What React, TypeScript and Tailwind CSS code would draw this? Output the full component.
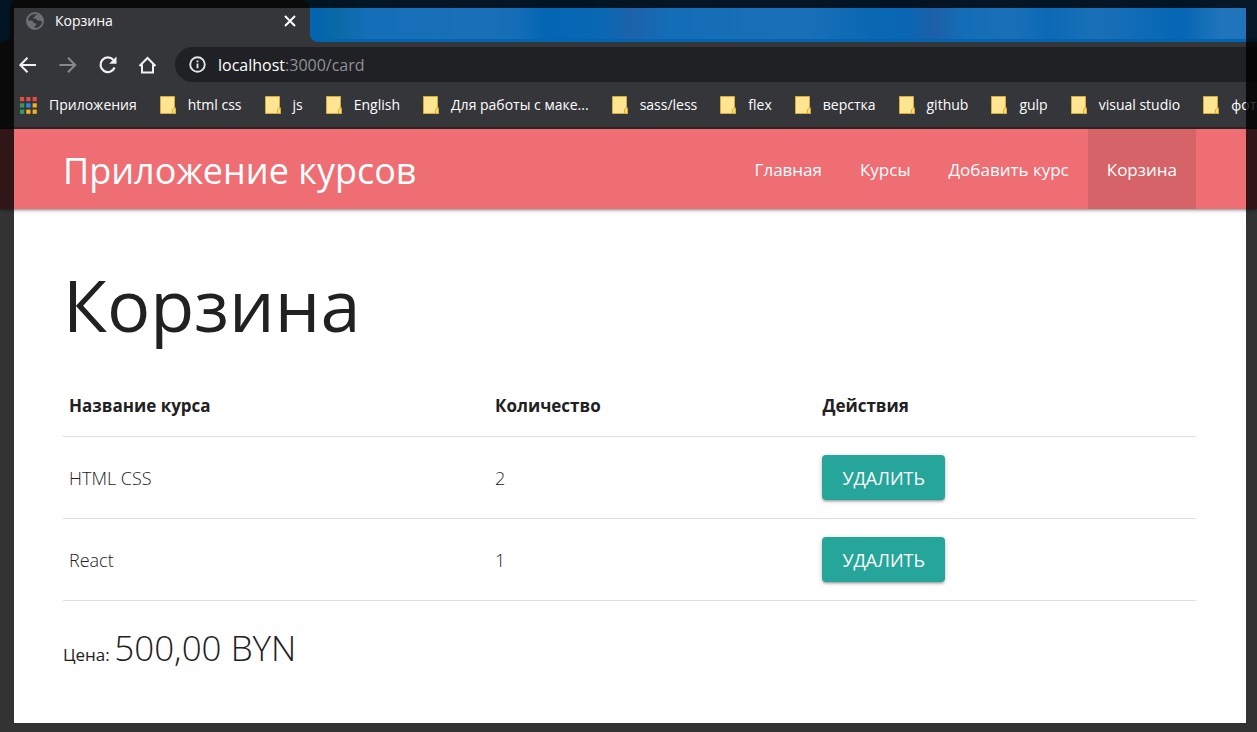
import React from "react";

const bookmarks = [
  "html css",
  "js",
  "English",
  "Для работы с маке...",
  "sass/less",
  "flex",
  "верстка",
  "github",
  "gulp",
  "visual studio",
  "фото",
];

const courses = [
  { title: "HTML CSS", count: 2 },
  { title: "React", count: 1 },
];

const links = ["Главная", "Курсы", "Добавить курс", "Корзина"];

function Globe() {
  return (
    <svg width="18" height="18" viewBox="0 0 18 18" aria-hidden="true">
      <circle cx="9" cy="9" r="8" fill="#35363a" stroke="#6b6e72" strokeWidth="2" />
      <path
        fill="#6b6e72"
        d="M1 8.500c2 .2 3.500-.5 5 .3 1.300.7 1 1.700 2.200 2.100 1.500.4 2.300.2 2.300 1.300 0 1.300-1.700 1-1.700 2.300V17C4 17 1 13 1 8.500zM11.500 1.400c0 1.200-.6 1.700-1.800 1.900-1.300.2-.7 1.700-1.900 1.900-.9.200-.9 1.300.1 1.400 1.700.1 2.400.1 2.900 1.200.4 1 1.600 1.200 2.600.8 1-.4 1.200.9 3.300.8C17 5 14.500 2 11.500 1.400z"
      />
    </svg>
  );
}

function Folder() {
  return (
    <svg width="16" height="18" viewBox="0 0 16 18" className="shrink-0" aria-hidden="true">
      <path d="M.5.500h14v11.500h1v5.500H.5z" fill="#ffe591" stroke="#d3ac3d" />
      <path d="M12.500 17.500v-4l1.500-1.500h1.500v5.500z" fill="#ffdc6b" stroke="#d3ac3d" />
    </svg>
  );
}

function AppsGrid() {
  const colors = ["#e84b3f", "#e84b3f", "#e84b3f", "#2fa05c", "#2f86f0", "#f5b120", "#2fa05c", "#f5b120", "#f5b120"];
  return (
    <svg width="17" height="17" viewBox="0 0 17 17" className="shrink-0" aria-hidden="true">
      {colors.map((c, i) => (
        <rect key={i} x={(i % 3) * 6.3} y={Math.floor(i / 3) * 6.3} width="4.200" height="4.200" fill={c} />
      ))}
    </svg>
  );
}

function BrowserChrome() {
  return (
    <div className="bg-[#35363a] text-white">
      <div className="flex h-[42px] bg-[#35363a]">
        <div className="flex w-[310px] bg-[#0064b1]">
          <div className="w-[10px] bg-[#35363a]">
            <div className="h-full rounded-br-lg bg-[#0064b1]" />
          </div>
          <div className="flex grow items-center rounded-t-lg bg-[#35363a] pl-4 pr-2.5">
            <Globe />
            <span className="grow pl-[11px] text-sm leading-5">Корзина</span>
            <button type="button" aria-label="Закрыть вкладку" className="p-1">
              <svg width="12" height="12" viewBox="0 0 12 12" fill="none" stroke="#fff" strokeWidth="2">
                <path d="M1 1l10 10M11 1L1 11" />
              </svg>
            </button>
          </div>
        </div>
        <div className="grow overflow-hidden rounded-bl-lg bg-[#0064b1] pb-[3px]">
          <div className="h-full bg-[linear-gradient(90deg,#0064b1_0%,#0a6aa5_3%,#146eb8_6%,#1a70b8_18%,#146db7_22%,#0365b3_25%,#0a68b3_31%,#1d62ab_34%,#146db7_38%,#1a70b8_52%,#0a68b3_59%,#0a66b3_63%,#1d5fa8_66%,#146db7_69%,#1a70b8_74%,#0c69b5_78%,#1a70b8_83%,#0566b4_92%,#1f74bb_96%)]" />
        </div>
      </div>

      <div className="flex h-[45px] items-center pl-[18px]">
        <div className="flex gap-5">
          <button type="button" aria-label="Назад">
            <svg width="20" height="20" viewBox="0 0 20 20" fill="none" stroke="#f1f1f1" strokeWidth="2">
              <path d="M18 10H3M9.500 2.700L2.300 10l7.200 7.300" />
            </svg>
          </button>
          <button type="button" aria-label="Вперёд">
            <svg width="20" height="20" viewBox="0 0 20 20" fill="none" stroke="#87888b" strokeWidth="2">
              <path d="M1.500 10h15M10 2.700l7.200 7.300-7.200 7.300" />
            </svg>
          </button>
          <button type="button" aria-label="Обновить">
            <svg width="20" height="20" viewBox="0 0 20 20" fill="none" stroke="#f1f1f1" strokeWidth="2.200">
              <path d="M16.600 12.500A7.300 7.300 0 1 1 15.400 5" />
              <path d="M18.500 1.500v7.300h-7.300z" fill="#f1f1f1" stroke="none" />
            </svg>
          </button>
          <button type="button" aria-label="Домой">
            <svg width="20" height="20" viewBox="0 0 20 20" fill="none" stroke="#f1f1f1" strokeWidth="2">
              <path d="M1.500 11L9.500 3l8 8M4 9.500v8h11V9.500" />
            </svg>
          </button>
        </div>
        <div className="ml-[17px] flex h-[35px] grow items-center gap-3 rounded-l-full bg-[#202124] pl-3.5">
          <svg width="17" height="17" viewBox="0 0 18 18" fill="none" stroke="#e4e5e7" strokeWidth="2" aria-hidden="true">
            <circle cx="9" cy="9" r="7.700" />
            <path d="M9 8v5M9 4.700v2" />
          </svg>
          <span className="text-base leading-6 text-[#8f9194]">
            <span className="text-white">localhost</span>:3000/card
          </span>
        </div>
      </div>

      <div className="flex h-10 items-center gap-[23px] overflow-hidden whitespace-nowrap pb-1 pl-5 text-sm leading-5">
        <a href="#apps" className="flex items-center gap-3">
          <AppsGrid />
          Приложения
        </a>
        {bookmarks.map((name) => (
          <a key={name} href="#bookmark" className="flex items-center gap-3">
            <Folder />
            {name}
          </a>
        ))}
      </div>
      <div className="h-[2px] bg-[#312427]" />
    </div>
  );
}

export default function App() {
  return (
    <div className="relative flex min-h-screen flex-col overflow-hidden bg-white font-['Open_Sans','Noto_Sans',sans-serif] text-lg text-[#212121]">
      <BrowserChrome />

      <nav className="flex h-20 items-center justify-between bg-[#ee6e73] pl-[63px] pr-[61px] text-white shadow-[0_2px_2px_0_rgba(0,0,0,0.14),0_3px_1px_-2px_rgba(0,0,0,0.12),0_1px_5px_0_rgba(0,0,0,0.2)]">
        <a href="#home" className="pt-1 text-4xl">
          Приложение курсов
        </a>
        <ul className="flex self-stretch">
          {links.map((name) => (
            <li key={name} className={name === "Корзина" ? "bg-[#d66367]" : ""}>
              <a href="#page" className="flex h-full items-center px-[19px] pt-0.5 text-[17px]">
                {name}
              </a>
            </li>
          ))}
        </ul>
      </nav>

      <main className="pb-12 pl-[63px] pr-[61px] pt-[51px]">
        <h1 className="text-[72px] leading-[88px]">Корзина</h1>
        <table className="mt-7 w-full table-fixed border-collapse text-left text-[17px]">
          <thead>
            <tr className="h-[60px] border-b border-[#e0e0e0]">
              <th className="w-[37.6%] px-1.5 font-bold">Название курса</th>
              <th className="w-[28.9%] px-1.5 font-bold">Количество</th>
              <th className="px-1.5 font-bold">Действия</th>
            </tr>
          </thead>
          <tbody>
            {courses.map((c) => (
              <tr key={c.title} className="h-[82px] border-b border-[#e0e0e0] text-lg font-light">
                <td className="px-1.5 pt-0.5">{c.title}</td>
                <td className="px-1.5 pt-0.5">{c.count}</td>
                <td className="px-1.5">
                  <button
                    type="button"
                    className="block h-[45px] rounded-sm bg-[#26a69a] px-5 pt-0.5 font-normal uppercase text-white shadow-[0_2px_2px_0_rgba(0,0,0,0.14),0_3px_1px_-2px_rgba(0,0,0,0.12),0_1px_5px_0_rgba(0,0,0,0.2)]"
                  >
                    Удалить
                  </button>
                </td>
              </tr>
            ))}
          </tbody>
        </table>
        <p className="mt-[23px] text-[17px] leading-[48px]">
          <span className="font-medium">Цена:</span>{" "}
          <span className="text-[35px] font-light leading-[48px]">500,00 BYN</span>
        </p>
      </main>

      <div className="pointer-events-none absolute inset-0 border-b-[9px] border-l-[14px] border-r-[11px] border-t-8 border-black/80" />
    </div>
  );
}
